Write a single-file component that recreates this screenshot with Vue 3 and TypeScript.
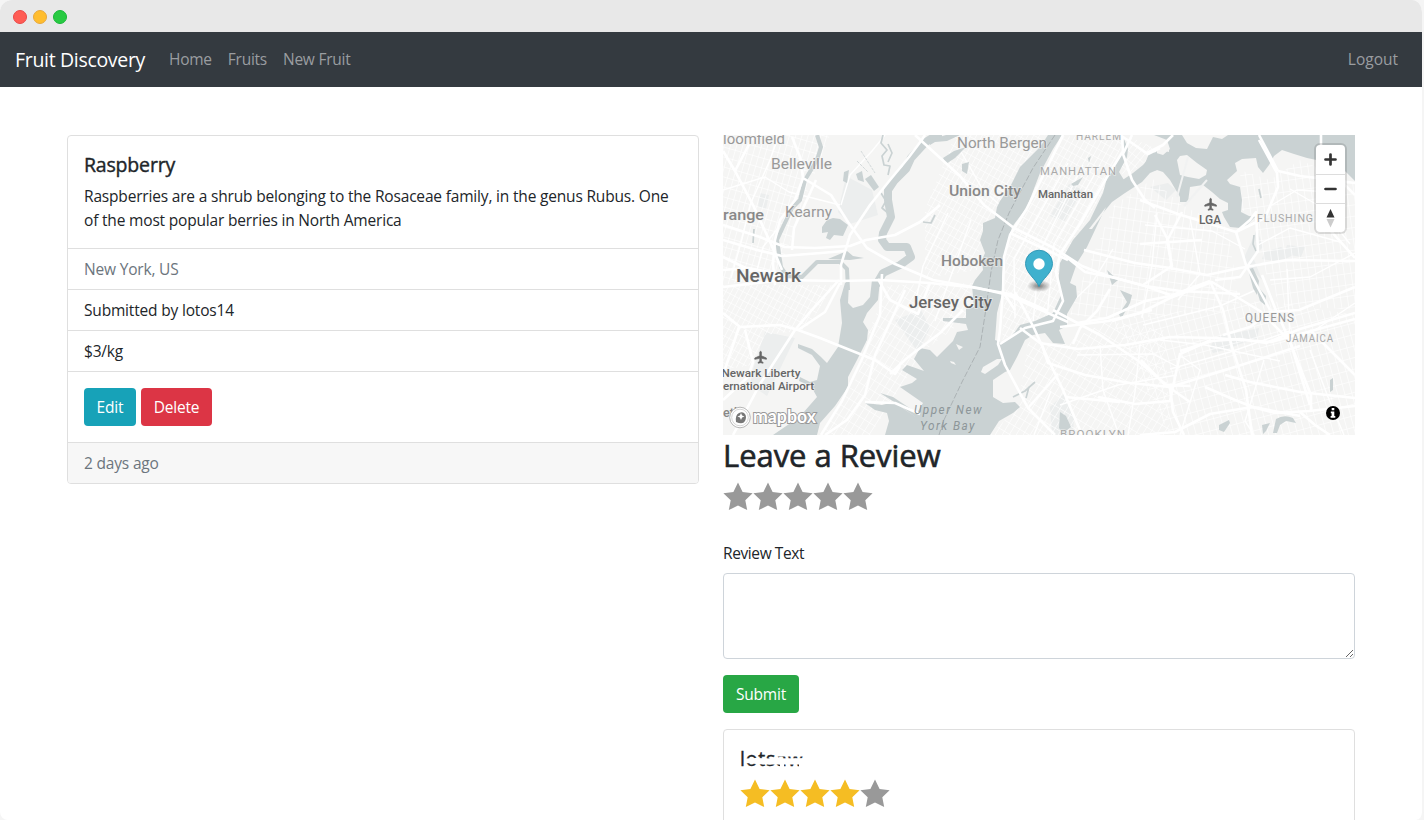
<script setup lang="ts">
import { ref } from 'vue'

interface MapLabel { text: string; x: number; y: number; width: number; size: number; kind: string }
interface Grid { area: string; angle: number; step: number; cx: number; cy: number; radius: number; both: boolean }

const reviewText = ref('')
const navLinks = ['Home', 'Fruits', 'New Fruit']
const starPoints = '15,.4 19.6,9.9 29.6,11.3 22.3,18.3 24.2,28.1 15,23.5 5.8,28.1 7.7,18.3 .4,11.3 10.4,9.9'

const water: string[] = [
  // Newark Bay
  'M845 283L840 300L842 323L838 347L827 363L821 357L812 349L798 344L798 348L812 355L820 366L817 380L810 382L800 377L799 381L811 386L817 397L803 413L795 420L773 435H817L820 423L835 406L848 387V377L857 360L867 340L868 330L863 322L867 313L878 300L880 280H872L870 297L863 305L853 308L848 303L849 283Z',
  // Hudson, Upper Bay and East River
  'M1048 135L1040 147L1028 159L1020 167L1010 187L1000 201L997 207L995 218L983 223V231L980 240L985 253L982 260L983 270L975 280L972 286L974 307L966 309V318L943 318V321L966 324L968 330L957 332L953 341L942 352L937 357L930 350L920 348L914 359L924 371L907 365L902 370L917 379L912 383L900 387L923 403L917 413L893 397L880 393L899 405L917 418L894 402L882 405L865 403L875 410L887 413L889 421L885 435H990L999 421L1013 413L1020 407L1015 402L1003 403L993 397V380L1005 372L1010 370L1017 357L1025 340L1033 335L1045 333L1053 343L1065 344L1059 330L1067 326V314L1077 297L1076 286L1070 283L1077 263L1087 247L1103 213L1112 202L1125 193L1142 182L1150 173L1157 170V151L1150 157L1143 165L1133 173L1118 183L1124 180L1119 172L1127 157L1128 149L1124 139L1122 151L1117 160L1107 178L1103 193L1090 220L1073 240L1060 263L1058 285L1062 293L1053 313L1035 321L1020 325L1011 337L1003 343L995 340L997 313L1003 290L1002 277L1005 253L1012 227L1027 207L1040 173L1053 149L1062 135Z',
  // Flushing Bay and the upper East River
  'M1150 151L1163 155L1170 149L1167 140L1154 135H1182L1187 143L1196 148L1207 149L1213 137L1222 139L1228 135H1355V181L1343 169L1326 162L1307 158L1294 154L1282 150L1274 156L1269 165L1263 173L1258 167L1256 158L1242 159L1235 163L1237 171L1227 180L1230 184L1240 187L1242 200L1241 212L1249 216L1255 217L1247 225L1240 228L1230 227L1224 217L1222 212L1228 210V203L1220 199L1212 192L1203 185L1190 187L1188 202H1180V197L1170 180L1163 172L1157 170L1148 172L1140 176Z',
  'M822 227L827 220L833 218L840 219L848 225L843 236L834 235L830 240L826 238L828 232L822 233Z',
  'M865 179L871 175L879 187L874 191Z', 'M930 145L935 142L947 141L960 135H946L930 140Z', 'M1248 269L1253 268L1259 281L1257 295L1253 288Z',
  'M1252 280L1266 296L1265 305L1260 301L1257 291Z', 'M1276 419Q1284 414 1293 418L1296 423L1286 421L1280 425L1277 433H1273Z',
  'M943 158L954 151L966 147L955 158L946 164ZM962 164L969 162L967 174L962 171Z',
  'M1060 412L1066 416L1071 427L1063 433L1059 428ZM1120 290L1132 295L1130 303L1121 319L1119 314L1127 302ZM1107 270L1118 280L1112 285Z',
  'M1219 425L1229 420L1230 423L1224 432L1219 430ZM1262 425L1270 423L1266 431L1263 434Z',
  'M844 172L849 170L847 183L843 181ZM856 174L862 171L864 182L858 180ZM847 251L853 256L864 258L850 260L828 259Z',
  'M1071 184L1083 177L1078 185L1073 186ZM1088 158L1091 156L1089 163ZM1330 380L1333 378V390L1330 392Z',
]
const islands = [
  'M1177 160L1180 156L1187 155L1197 163L1207 170L1206 175L1199 179L1188 177L1180 175Z', 'M1165 148L1169 147L1169 152L1165 151Z',
  'M983 367L997 359L1002 359L998 365L985 374L981 372Z', 'M956 344L963 347L959 350ZM950 361L954 362L956 365L951 363Z', 'M1089 229L1106 207L1103 214L1092 229Z',
]
const parks = [
  'M1050 216L1069 184L1083 190L1064 222Z', 'M1210 347L1216 337L1259 328L1257 339L1240 344L1225 350L1213 353Z',
  'M1050 407L1065 393L1074 418L1073 435H1052Z', 'M1243 260L1257 229L1263 247L1253 257L1262 280Z', 'M760 193L769 195L766 209L758 207Z',
  'M754 366L765 332L795 338L767 396L750 384Z', 'M1150 187L1168 183L1176 190L1166 200Z', 'M1287 245L1305 247L1301 257L1284 254Z', 'M895 320L921 310L930 328L918 352Z',
  'M1264 252L1281 247L1293 255L1280 262L1262 259Z', 'M846 176L872 190L878 215L850 224L838 212Z',
]
const grids: Grid[] = [
  { area: '723,135 830,135 803,205 778,275 723,285', angle: 16, step: 6, cx: 775, cy: 215, radius: 140, both: true },
  { area: '723,285 835,285 805,330 765,335 752,365 723,370', angle: 28, step: 5, cx: 770, cy: 315, radius: 100, both: true },
  { area: '888,285 973,283 965,320 925,350 870,435 822,435 858,375 869,330', angle: 32, step: 6, cx: 895, cy: 350, radius: 145, both: true },
  { area: '955,135 1045,135 1008,190 995,215 982,230 977,270 925,278 925,210', angle: 29, step: 5, cx: 978, cy: 205, radius: 115, both: true },
  { area: '1063,136 1124,139 1103,193 1059,264 1063,293 1050,315 1002,340 1006,255 1013,225', angle: 29, step: 5, cx: 1055, cy: 235, radius: 155, both: true },
  { area: '1129,137 1160,150 1125,177 1119,170', angle: 39, step: 5, cx: 1140, cy: 160, radius: 60, both: true },
  { area: '1114,205 1153,179 1180,204 1228,228 1240,310 1110,320 1070,315 1078,290', angle: 8, step: 7, cx: 1160, cy: 250, radius: 135, both: true },
  { area: '1240,170 1270,180 1300,160 1355,184 1355,310 1280,305 1256,250 1255,218 1242,210', angle: -8, step: 7, cx: 1300, cy: 240, radius: 115, both: true },
  { area: '1028,342 1062,345 1107,321 1165,330 1170,435 990,435 1018,407', angle: 31, step: 6, cx: 1090, cy: 380, radius: 125, both: true },
  { area: '1112,320 1265,300 1355,315 1355,435 1170,435', angle: -15, step: 7, cx: 1240, cy: 370, radius: 150, both: true },
]
function gridPath(g: Grid): string {
  let path = ''
  for (let v = -g.radius; v <= g.radius; v += g.step) {
    path += `M${g.cx + v} ${g.cy - g.radius}V${g.cy + g.radius}`
    if (g.both) path += `M${g.cx - g.radius} ${g.cy + v * 1.6}H${g.cx + g.radius}`
  }
  return path
}
const mainRoads = [
  'M723 151L735 171L753 205L771 244L782 270', 'M735 171L754 135', 'M723 225L760 237L785 247L815 248L850 246L866 240L895 235L920 222L940 205',
  'M723 240L757 250L782 256L821 253L844 251', 'M723 257L760 275L790 281', 'M723 270L748 268L785 275', 'M792 137L800 157L803 178L831 195L848 222L867 248L895 264L933 280L978 288L1004 294',
  'M803 178L795 200L780 220L775 240L773 264L775 285', 'M816 180L794 228L792 250', 'M841 285L841 265L850 235L870 205L890 180L909 157L921 141L925 135', 'M915 135L960 176L984 205L1014 228L1054 248L1082 266L1105 275L1145 286L1170 295',
  'M723 313L740 327L780 325L798 330L820 338L875 360L895 374L900 366', 'M839 280L810 312L795 330L760 384L733 435', 'M840 283L825 312L798 330', 'M723 287L782 280L840 281',
  'M882 274L880 315L862 359L842 401L821 435', 'M905 290L875 355L865 395L847 420L825 435', 'M745 330L753 362L748 377L723 400', 'M739 327L723 375',
  'M840 281L880 280L930 283L970 287L1010 294L1048 311', 'M890 374L907 358L940 333L963 310', 'M865 402L895 403L920 414', 'M878 279L890 300L918 314L930 283',
  'M1000 344L1025 328L1053 321L1063 301L1056 272L1060 254L1080 224L1104 182L1123 151L1122 136', 'M1003 290L1000 330L998 344L1005 365L1028 408L1055 435', 'M1063 135L1045 172L1026 210L1010 235L1004 257L1003 292L1015 310',
  'M1010 233L1068 260', 'M1003 293L1068 322', 'M1015 292L1034 328L1048 359L1063 390L1082 435', 'M1020 328L1040 343L1078 349L1125 345L1170 337L1215 338L1271 342L1355 319',
  'M1053 310L1100 335L1137 360L1170 388L1190 402', 'M1112 321L1140 313L1170 298L1212 282L1260 311L1290 341L1310 405', 'M1059 251L1085 272L1115 278L1145 286L1180 291L1240 294', 'M1084 250L1135 263L1170 268L1207 275L1240 268L1287 260L1355 261',
  'M1077 323L1107 318L1145 301L1170 296L1210 281', 'M1060 327L1108 321L1152 310', 'M1073 344L1080 328L1097 311L1110 289', 'M1041 342L1048 363L1085 375L1130 383L1170 387L1235 367L1300 346',
  'M1098 397L1135 404L1170 401L1180 354L1211 340', 'M1028 408L1058 374', 'M1065 397L1120 402', 'M1132 135L1123 154L1132 180L1145 200L1155 208', 'M1120 135L1148 154L1160 148',
  'M1147 153L1163 145L1173 135', 'M1140 200L1178 214L1236 232L1265 218L1278 187L1277 173L1259 140', 'M1236 232L1246 265L1256 284L1270 310', 'M1236 232L1250 220L1256 212L1258 251L1240 277L1215 280',
  'M1278 171L1300 176L1325 179L1355 183', 'M1321 135V165L1345 185L1355 195', 'M1182 212L1167 241L1172 266L1143 285', 'M1155 215L1168 240L1172 270',
  'M1140 244L1170 242L1202 240', 'M1210 281L1223 310L1232 347L1246 390L1252 435', 'M1170 388L1173 412L1184 435', 'M1252 407L1275 413L1309 411L1355 406', 'M1205 387L1235 400L1253 407L1300 416',
  'M1262 275L1275 308L1288 337L1311 395V412', 'M1223 335L1250 327L1270 312L1299 310L1355 287', 'M1180 351L1212 341L1240 339L1266 343L1300 329L1355 313', 'M1225 375L1250 382L1300 392L1327 395L1355 398',
  'M1141 360L1165 385L1190 386', 'M1140 435L1175 432L1210 414L1252 407', 'M1300 412L1315 425L1330 435', 'M1310 330L1340 360L1355 375', 'M1330 230L1355 258', 'M1259 135L1278 171',
]
const secondaryRoads = [
  'M723 190L765 177L789 192L840 205', 'M731 278L742 239L750 205L770 160L779 135', 'M755 278L763 247L778 228', 'M885 135L872 151L850 175L841 205', 'M948 213L923 266L914 310', 'M971 220L948 284L935 321',
  'M960 150L983 190L1010 214', 'M1068 163L1014 259L1015 318', 'M1083 165L1040 251L1033 322', 'M1100 165L1054 244L1047 318', 'M1113 249L1092 283L1065 309', 'M1157 213L1152 265L1142 318',
  'M1190 218L1200 274L1178 300', 'M1145 225L1212 231L1245 249', 'M1143 325L1220 306L1258 289', 'M1160 340L1205 345L1280 361', 'M1170 369L1230 352L1290 331', 'M1180 355L1200 370L1180 435', 'M1290 189L1321 207L1350 244',
  'M1272 205L1297 190L1330 192', 'M1258 245L1290 228L1340 242', 'M1270 280L1310 277L1355 253', 'M1287 269L1290 341L1315 330L1355 303', 'M1264 360L1245 421L1254 435', 'M1310 350L1328 397L1344 435',
  'M1051 391L1034 435', 'M1100 345L1103 390L1119 435', 'M1077 355L1153 354L1180 368', 'M1140 345L1135 392L1128 435', 'M1060 405L1118 385L1177 375',
]
const labels: MapLabel[] = [
  { text: 'loomfield', x: 723, y: 143.5, width: 62, size: 14.5, kind: 'soft' }, { text: 'Belleville', x: 771, y: 168.5, width: 61, size: 14, kind: 'soft' },
  { text: 'range', x: 723, y: 219.5, width: 41, size: 14.5, kind: 'town' }, { text: 'Kearny', x: 785, y: 217, width: 47, size: 14, kind: 'soft' },
  { text: 'Newark', x: 736, y: 281.5, width: 65, size: 19, kind: 'city' }, { text: 'North Bergen', x: 957, y: 148, width: 90, size: 14, kind: 'soft' },
  { text: 'Union City', x: 949, y: 196, width: 72, size: 15, kind: 'town' }, { text: 'Hoboken', x: 941, y: 266, width: 62, size: 15, kind: 'town' },
  { text: 'Jersey City', x: 909, y: 308, width: 83, size: 16, kind: 'city' }, { text: 'HARLEM', x: 1076, y: 139.5, width: 46, size: 10.5, kind: 'district' },
  { text: 'MANHATTAN', x: 1040, y: 175, width: 77, size: 11.5, kind: 'district' }, { text: 'Manhattan', x: 1038, y: 197.5, width: 55, size: 11.5, kind: 'place' },
  { text: 'LGA', x: 1199, y: 223.5, width: 22, size: 12, kind: 'place' }, { text: 'FLUSHING', x: 1257, y: 222, width: 57, size: 11.5, kind: 'district' },
  { text: 'QUEENS', x: 1245, y: 321.5, width: 50, size: 12, kind: 'district dark' }, { text: 'JAMAICA', x: 1286, y: 342, width: 48, size: 11, kind: 'district' },
  { text: 'BROOKLYN', x: 1060, y: 438, width: 66, size: 11.5, kind: 'district' }, { text: 'Newark Liberty', x: 721.5, y: 377, width: 79, size: 11.5, kind: 'place' },
  { text: 'ernational Airport', x: 723, y: 390, width: 91, size: 11.5, kind: 'place' }, { text: 'Upper New', x: 914, y: 414, width: 69, size: 12, kind: 'bay' },
  { text: 'York Bay', x: 920, y: 430, width: 56, size: 12, kind: 'bay' }, { text: 'eth', x: 723, y: 417, width: 18, size: 13, kind: 'town' },
]
</script>

<template>
  <div class="window">
    <div class="titlebar"><i class="dot red"></i><i class="dot yellow"></i><i class="dot green"></i></div>
    <nav class="navbar">
      <a class="brand">Fruit Discovery</a>
      <a v-for="link in navLinks" :key="link" class="nav-link">{{ link }}</a>
      <a class="nav-link logout">Logout</a>
    </nav>
    <main class="content">
      <section class="card">
        <div class="card-body intro">
          <h5>Raspberry</h5>
          <p>Raspberries are a shrub belonging to the Rosaceae family, in the genus Rubus. One of the most popular berries in North America</p>
        </div>
        <div class="row muted">New York, US</div>
        <div class="row">Submitted by lotos14</div>
        <div class="row">$3/kg</div>
        <div class="actions"><button class="btn edit">Edit</button><button class="btn delete">Delete</button></div>
        <div class="row footer muted">2 days ago</div>
      </section>
      <section class="side">
        <div class="map">
          <svg class="canvas" viewBox="723 135 632 300" width="632" height="300">
            <defs>
              <clipPath v-for="(g, i) in grids" :id="'area' + i" :key="i"><polygon :points="g.area" /></clipPath>
              <radialGradient id="shade"><stop offset="0" stop-opacity=".5" /><stop offset="1" stop-opacity="0" /></radialGradient>
            </defs>
            <rect x="723" y="135" width="632" height="300" fill="#f5f5f4" />
            <path v-for="d in parks" :key="d" :d="d" fill="#eceeee" />
            <g v-for="(g, i) in grids" :key="i" :clip-path="`url(#area${i})`">
              <path :d="gridPath(g)" :transform="`rotate(${g.angle} ${g.cx} ${g.cy})`" class="street" />
            </g>
            <path v-for="d in secondaryRoads" :key="d" :d="d" class="road minor" />
            <path class="river wide" d="M942 136Q929 137 922 146L911 158L906 169L894 181L888 190L888 200L891 217L883 233L882 240L887 247L907 247L911 257L900 265L883 273L876 285" />
            <path class="river" d="M848 290L847 269L840 262H817L802 277L787 276L781 267L777 240L783 227L792 208L800 200L805 180L817 160L821 147L817 135" />
            <path class="creek" d="M883 135L881 143L887 150L882 156L884 165L890 166L888 175M888 144L892 153L888 162M881 193L886 201L882 208L888 213M923 222L931 223L935 215M754 229L753 243M1259 189L1261 198M1254 235L1253 244L1256 251M1013 397L1025 391L1035 382M1026 398L1029 387" />
            <path class="creek thin" d="M861 151L875 173M857 161L868 172" />
            <path v-for="d in water" :key="d" :d="d" class="water" />
            <path v-for="d in islands" :key="d" :d="d" fill="#f5f5f4" />
            <path class="boundary" d="M1055 135L1033 168L1009 213L998 240L991 272L985 315L980 347L962 382L943 422L939 435" />
            <path class="bridge" d="M1188 157L1177 197M1207 180L1184 206" />
            <path v-for="d in mainRoads" :key="d" :d="d" class="road" />
            <text v-for="label in labels" :key="label.text" :x="label.x" :y="label.y" :font-size="label.size" :textLength="label.width" lengthAdjust="spacingAndGlyphs" :class="['label', label.kind]">{{ label.text }}</text>
            <g fill="#666" stroke="#666" stroke-width=".7" stroke-linejoin="round">
              <path id="plane" d="M1209.800 199c.5-.9 1.200-.9 1.600 0v3.800l5 2.200v1.300l-5-1v3l1.700 1.100v.8l-2.500-.5-2.500.5v-.8l1.700-1.100v-3l-5 1V205l5-2.200Z" />
              <use href="#plane" transform="translate(-450 153)" />
            </g>
            <g>
              <circle cx="740" cy="417.5" r="10.3" fill="#fff" stroke="#999" stroke-width=".7" />
              <circle cx="740" cy="417.5" r="8.3" fill="none" stroke="#bbb" stroke-width=".6" />
              <path d="M736 422q-1-7 3-9t6 1 0 7-9 1Z" fill="#777" /><path d="m741 413 1.100 2.500 2.400 1-2.400 1.100-1.100 2.400-1.100-2.400-2.400-1.100 2.400-1Z" fill="#fff" />
              <text x="753" y="422.5" textLength="63" lengthAdjust="spacingAndGlyphs" class="wordmark">mapbox</text>
            </g>
            <ellipse cx="1039" cy="286" rx="12" ry="6" fill="url(#shade)" />
            <path d="M1039 286.500C1036 279 1025.500 273 1025.500 263.500a13.500 13.300 0 0 1 27 0C1052.500 273 1042 279 1039 286.500Z" fill="#3fb1ce" stroke="#3299b7" />
            <circle cx="1039" cy="264" r="5.7" fill="#fff" />
            <g><rect x="1314" y="143" width="33" height="91" rx="6" fill="#000" opacity=".12" /><rect x="1316" y="145" width="29" height="87" rx="4" fill="#fff" /><path d="M1316 174.500H1345M1316 203.500H1345" stroke="#ddd" /><path d="M1325.500 159.500H1335.500M1330.500 154.500V164.500M1325.500 189H1335.500" stroke="#333" stroke-width="2.7" stroke-linecap="round" /><path d="M1330.500 209L1334.500 217.500H1326.500Z" fill="#333" /><path d="M1330.500 227.500L1334.500 219H1326.500Z" fill="#ccc" /></g>
            <circle cx="1333" cy="413" r="7" /><path d="M1331.700 408h2.600v2.300h-2.600ZM1330.800 411.500h3.500v4.500h1v1.700h-4.700V416h1v-2.800h-.8Z" fill="#fff" />
          </svg>
        </div>
        <h2>Leave a Review</h2>
        <div class="stars"><svg v-for="n in 5" :key="n" width="30" height="30" viewBox="0 0 30 30"><polygon :points="starPoints" fill="#999" /></svg></div>
        <label for="review">Review Text</label>
        <textarea id="review" v-model="reviewText" rows="3"></textarea>
        <button class="btn submit">Submit</button>
        <article class="card review">
          <h5 class="reviewer">lotsaw
            <svg class="smudge" width="66" height="20" viewBox="0 0 66 20"><path d="M0 8.500L10 8 25 8.500 66 8V14.500H20L10 14 0 13ZM30 0H66V6.500H30ZM34 13H38V20H34ZM53 13H58V20H53Z" fill="#fff" /></svg>
          </h5>
          <div class="stars"><svg v-for="n in 5" :key="n" width="30" height="30" viewBox="0 0 30 30"><polygon :points="starPoints" :fill="n < 5 ? '#f5bd23' : '#999'" /></svg></div>
        </article>
      </section>
    </main>
  </div>
</template>

<style>
html, body { margin: 0; overflow: hidden; background: #f5f5f5; }
</style>
<style scoped>
* { box-sizing: border-box; }
.window { width: 1424px; height: 820px; overflow: hidden; border-radius: 12px 12px 8px 8px; background: #fff; border-right: 2px solid #f5f5f5; color: #212529; font: 400 15.5px/24px "Open Sans", "Noto Sans", sans-serif; letter-spacing: -.18px; }
.titlebar { display: flex; align-items: center; gap: 6px; width: 1424px; height: 32px; padding: 2px 0 0 13px; background: #e8e8e8; }
.dot { width: 14px; height: 14px; border: 1px solid #e84848; border-radius: 50%; background: #ff5c54; }
.yellow { border-color: #e6a83c; background: #ffbd2e; }
.green { border-color: #18b638; background: #28ca42; }
.navbar { display: flex; align-items: center; height: 55px; padding: 0 24px 0 15px; background: #343a40; }
.brand { width: 154px; color: #fff; font-size: 19.5px; letter-spacing: -.32px; white-space: nowrap; }
.nav-link { margin-right: 16px; padding-bottom: 2px; color: #9a9da0; letter-spacing: -.25px; }
.logout { margin: 0 0 0 auto; letter-spacing: 0; }
.content { display: flex; gap: 24px; align-items: flex-start; padding: 48px 67px 0; }
.card { width: 632px; overflow: hidden; border: 1px solid #dfdfdf; border-radius: 4px; background: #fff; }
.card-body { padding: 16px; }
h5 { margin: 0 0 8px; font-size: 19.5px; font-weight: 400; line-height: 24px; -webkit-text-stroke: .4px #212529; }
.intro h5 { padding-top: 1px; margin-bottom: 7px; }
p { margin: 0; }
.row { height: 41px; padding: 8px 16px; border-top: 1px solid #dfdfdf; }
.muted { color: #6c757d; }
.actions { display: flex; gap: 5px; height: 71px; padding: 16px; border-top: 1px solid #dfdfdf; }
.footer { background: #f7f7f7; }
.btn { display: block; height: 38px; padding: 0; border: 0; border-radius: 4px; color: #fff; font: inherit; letter-spacing: inherit; }
.edit { width: 52px; background: #17a2b8; }
.delete { width: 71px; background: #dc3545; }
.submit { width: 76px; background: #28a745; }
.side { width: 632px; }
.map { height: 300px; overflow: hidden; }
.canvas { display: block; letter-spacing: 0; }
h2 { height: 39px; margin: 0 0 8px; padding-top: 1px; font-size: 31px; font-weight: 400; line-height: 39px; letter-spacing: -.05px; -webkit-text-stroke: .6px #212529; }
.stars { display: flex; height: 30px; }
label { display: block; margin: 29px 0 8px; letter-spacing: -.4px; }
textarea { display: block; width: 632px; height: 86px; margin: 0 0 16px; border: 1px solid #ced4da; border-radius: 4px; resize: vertical; }
.review { height: 140px; margin-top: 16px; padding: 16px; }
.reviewer { position: relative; height: 24px; margin-bottom: 9px; padding-top: 1px; letter-spacing: .8px; }
.smudge { position: absolute; left: 6px; top: 4px; }
.water { fill: #cad2d3; }
.river, .creek { fill: none; stroke: #cad2d3; stroke-width: 4; stroke-linejoin: round; }
.wide { stroke-width: 8; }
.creek { stroke-width: 1.7; }
.thin { stroke-width: .8; stroke-dasharray: 3 1; }
.street { fill: none; stroke: #fff; stroke-width: .8; opacity: .75; }
.road { fill: none; stroke: #fff; stroke-width: 2.6; stroke-linejoin: round; }
.minor { stroke-width: 1.4; }
.bridge { fill: none; stroke: #f1f2f2; stroke-width: 2; }
.boundary { fill: none; stroke: #a3a9ac; stroke-width: .8; stroke-dasharray: 6 2; }
.label { fill: #777; font-family: Roboto, sans-serif; paint-order: stroke; stroke: #f5f5f4; stroke-opacity: .6; stroke-width: 1.5px; }
.soft { fill: #999; }
.town { fill: #888; font-weight: 500; }
.city { fill: #666; font-weight: 500; }
.place { fill: #666; font-weight: 500; }
.district { fill: #aaa; letter-spacing: 1px; }
.dark { fill: #999; }
.bay { fill: #8d9699; font-style: italic; letter-spacing: 1.5px; stroke: none; }
.wordmark { font: 700 18px Lato, sans-serif; fill: #fff; stroke: #999; stroke-width: 2px; paint-order: stroke; }
</style>
